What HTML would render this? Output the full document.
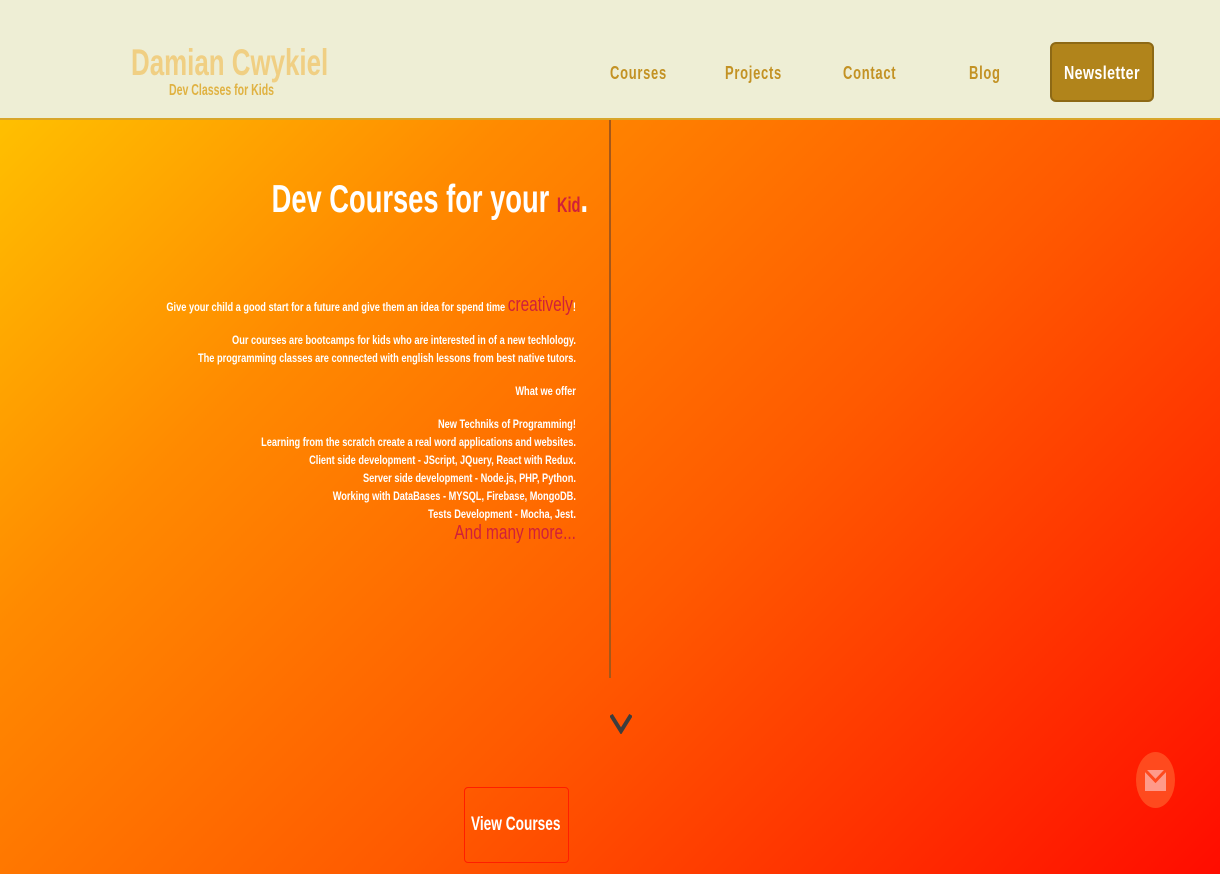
<!DOCTYPE html>
<html style="width:1220px;height:874px;overflow:hidden"><head><meta charset="utf-8"><style>
*{margin:0;padding:0;box-sizing:border-box}
html,body{width:1220px;height:874px;overflow:hidden}
body{font-family:"Liberation Sans",sans-serif;position:relative;background:linear-gradient(135deg,#ffcc00 0%,#ff8a00 30%,#ff5a00 60%,#ff0c00 100%)}
.n{display:inline-block;transform-origin:left top;white-space:nowrap}
header{position:absolute;left:0;top:0;width:1220px;height:120px;background:#eeeed5;border-bottom:2px solid #d9a62a}
.logo{position:absolute;left:131px;top:42px;font-weight:bold;font-size:37px;color:#f0cf83;transform:scaleX(.7)}
.sub{position:absolute;left:169px;top:82px;font-size:16px;font-weight:bold;color:#e0b242;transform:scaleX(.66)}
nav a{position:absolute;top:63px;font-size:18px;font-weight:bold;color:#c39224;letter-spacing:1px;transform:scaleX(.72);transform-origin:left}
.nl{position:absolute;left:1050px;top:42px;width:104px;height:60px;background:#b1841b;border:2px solid #8d6915;border-radius:6px}
.nl span{position:absolute;left:12px;top:19px;color:#fff;font-weight:bold;font-size:18px;letter-spacing:.5px;transform:scaleX(.79);transform-origin:left top;white-space:nowrap}
.vl{position:absolute;left:609px;top:120px;width:2px;height:558px;background:#a5581a}
h1{position:absolute;right:632px;top:178px;font-size:39px;color:#fff;font-weight:bold;white-space:nowrap;transform:scaleX(.7);transform-origin:right top}
h1 span{color:#d0203a;font-size:21px}
.txt{position:absolute;right:644px;top:298px;text-align:right;color:#fff;font-weight:bold;font-size:12px;line-height:18px;white-space:nowrap;transform:scaleX(.77);transform-origin:right top}
.txt .g{height:15px}
.r{color:#d0203a}
.arrow{position:absolute;left:610px;top:714px}
.btn{position:absolute;left:464px;top:787px;width:105px;height:76px;border:1px solid #ff1e00;border-radius:4px}
.btn span{position:absolute;left:6px;top:26px;color:#fff;font-weight:bold;font-size:19px;white-space:nowrap;transform:scaleX(.72);transform-origin:left top}
.mail{position:absolute;left:1136px;top:752px;width:39px;height:56px;border-radius:50%;background:#ff4a1e}
</style></head><body>
<header>
<div class="logo n">Damian Cwykiel</div>
<div class="sub n">Dev Classes for Kids</div>
<nav><a class="n" style="left:610px">Courses</a><a class="n" style="left:725px">Projects</a><a class="n" style="left:843px">Contact</a><a class="n" style="left:969px">Blog</a></nav>
<div class="nl"><span>Newsletter</span></div>
</header>
<div class="vl"></div>
<h1>Dev Courses for your <span>Kid</span>.</h1>
<div class="txt">
<div>Give your child a good start for a future and give them an idea for spend time <span class="r" style="font-size:20px;font-weight:normal;line-height:10px">creatively</span>!</div>
<div class="g"></div>
<div>Our courses are bootcamps for kids who are interested in of a new techlology.</div>
<div>The programming classes are connected with english lessons from best native tutors.</div>
<div class="g"></div>
<div>What we offer</div>
<div class="g"></div>
<div>New Techniks of Programming!</div>
<div>Learning from the scratch create a real word applications and websites.</div>
<div>Client side development - JScript, JQuery, React with Redux.</div>
<div>Server side development - Node.js, PHP, Python.</div>
<div>Working with DataBases - MYSQL, Firebase, MongoDB.</div>
<div>Tests Development - Mocha, Jest.</div>
<div class="r" style="font-size:20px;font-weight:normal;line-height:20px">And many more...</div>
</div>
<svg class="arrow" width="22" height="20" viewBox="0 0 22 20"><path d="M1 1 L11 17 L21 1" fill="none" stroke="#3d3d3d" stroke-width="4"/></svg>
<div class="btn"><span>View Courses</span></div>
<div class="mail"><svg style="position:absolute;left:9px;top:18px" width="21" height="21" viewBox="0 0 21 21"><rect x="0" y="0" width="21" height="21" fill="#ff9a8a"/><path d="M0 0 L10.5 11 L21 0" fill="none" stroke="#ff4a1e" stroke-width="3"/></svg></div>
</body></html>
